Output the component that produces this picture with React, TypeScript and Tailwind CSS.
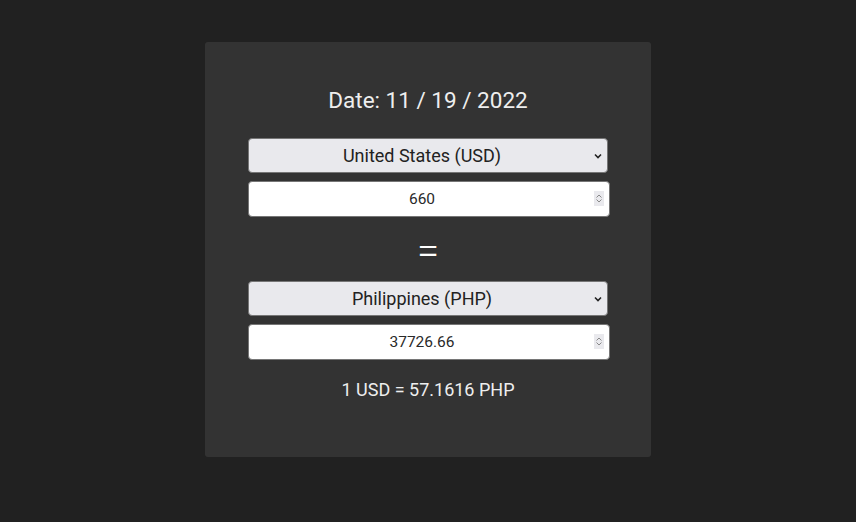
import { useState } from 'react';

const RATE = 57.1616;

function CurrencySelect({ label }: { label: string }) {
  return (
    <div className="relative w-[360px] self-start">
      <select className="w-full h-[35px] appearance-none rounded-[4px] bg-[#e9e9ed] border border-[#767676] text-[18px] text-[#222] [text-align-last:center] pl-2 pr-[20px] outline-none">
        <option>{label}</option>
      </select>
      {/* chevron */}
      <svg className="pointer-events-none absolute right-[6px] top-[15px]" width="8" height="6" viewBox="0 0 8 6">
        <path d="M1 1.5 L4 4.5 L7 1.5" fill="none" stroke="#222" strokeWidth="1.6" />
      </svg>
    </div>
  );
}

function AmountInput({ value, onChange, readOnly }: { value: string; onChange?: (v: string) => void; readOnly?: boolean }) {
  return (
    <div className="relative mt-[8px] w-[362px] self-start">
      <input
        type="number"
        value={value}
        readOnly={readOnly}
        onChange={(e) => onChange?.(e.target.value)}
        className="w-full h-[36px] rounded-[4px] bg-white border border-[#767676] text-[15.5px] text-[#2a2a2a] text-center pl-2 pr-[22px] outline-none [appearance:textfield] [&::-webkit-inner-spin-button]:appearance-none [&::-webkit-outer-spin-button]:appearance-none"
      />
      {/* spinner */}
      <div className="pointer-events-none absolute right-[6px] top-[10px] w-[10px] h-[15px] bg-[#e9e9ed] flex flex-col items-center justify-center gap-[1px]">
        <svg width="6" height="4" viewBox="0 0 6 4">
          <path d="M0.5 3.5 L3 1 L5.5 3.5" fill="none" stroke="#888" strokeWidth="1" />
        </svg>
        <svg width="6" height="4" viewBox="0 0 6 4">
          <path d="M0.5 0.5 L3 3 L5.5 0.5" fill="none" stroke="#888" strokeWidth="1" />
        </svg>
      </div>
    </div>
  );
}

export default function App() {
  const [amount, setAmount] = useState('660');
  const converted = (parseFloat(amount || '0') * RATE).toFixed(2);

  return (
    <div className="min-h-screen w-full bg-[#212121] flex justify-center font-['Roboto',sans-serif]">
      <div className="mt-[42px] w-[446px] h-[415px] rounded-[3px] bg-[#333333] px-[43px] pt-[44px] flex flex-col items-center">
        {/* Date */}
        <h1 className="text-[22.5px] leading-[28px] text-[#eeeeee] mb-[24px]">Date: 11 / 19 / 2022</h1>

        <CurrencySelect label="United States (USD)" />
        <AmountInput value={amount} onChange={setAmount} />

        {/* Equals */}
        <div className="mt-[14px] mb-[10px] text-[40px] leading-[40px] text-white font-light">=</div>

        <CurrencySelect label="Philippines (PHP)" />
        <AmountInput value={converted} readOnly />

        <p className="mt-[19px] text-[18px] leading-[22px] text-[#eeeeee]">1 USD = {RATE} PHP</p>
      </div>
    </div>
  );
}
